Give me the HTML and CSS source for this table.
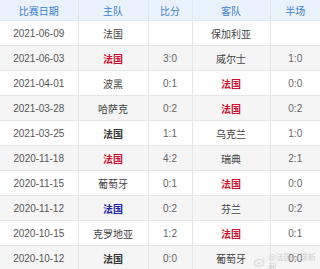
FILE: index.html
```html
<!DOCTYPE html>
<html>
<head>
<meta charset="utf-8">
<link rel="stylesheet" href="styles.css">
</head>
<body>
<div class="wrap">
<table class="tbl">
<colgroup><col class="c1"><col class="c2"><col class="c3"><col class="c4"><col class="c5"></colgroup>
<thead>
<tr><th>比赛日期</th><th>主队</th><th>比分</th><th>客队</th><th>半场</th></tr>
</thead>
<tbody>
<tr><td>2021-06-09</td><td>法国</td><td></td><td>保加利亚</td><td></td></tr>
<tr><td>2021-06-03</td><td class="red">法国</td><td>3:0</td><td>威尔士</td><td>1:0</td></tr>
<tr><td>2021-04-01</td><td>波黑</td><td>0:1</td><td class="red">法国</td><td>0:0</td></tr>
<tr><td>2021-03-28</td><td>哈萨克</td><td>0:2</td><td class="red">法国</td><td>0:2</td></tr>
<tr><td>2021-03-25</td><td class="bold">法国</td><td>1:1</td><td>乌克兰</td><td>1:0</td></tr>
<tr><td>2020-11-18</td><td class="red">法国</td><td>4:2</td><td>瑞典</td><td>2:1</td></tr>
<tr><td>2020-11-15</td><td>葡萄牙</td><td>0:1</td><td class="red">法国</td><td>0:0</td></tr>
<tr><td>2020-11-12</td><td class="blue">法国</td><td>0:2</td><td>芬兰</td><td>0:2</td></tr>
<tr><td>2020-10-15</td><td>克罗地亚</td><td>1:2</td><td class="red">法国</td><td>0:1</td></tr>
<tr><td>2020-10-12</td><td class="bold">法国</td><td>0:0</td><td>葡萄牙</td><td>0:0</td></tr>
</tbody>
</table>
<div class="mark">
<svg class="wlogo" width="13" height="10" viewBox="0 0 14 11"><ellipse cx="6" cy="6.5" rx="5.5" ry="4" fill="none" stroke="#bbb" stroke-width="1.2"/><circle cx="5.5" cy="7" r="1.6" fill="#c8c8c8"/><path d="M10 1.5 A3 3 0 0 1 13 4.5" fill="none" stroke="#ccc" stroke-width="1"/></svg>
<span class="mtext">@法国足球新闻</span>
</div>
</div>
</body>
</html>
```
FILE: styles.css
```css
html, body {
  margin: 0;
  padding: 0;
  background: #fff;
}
.wrap {
  position: relative;
  width: 320px;
  height: 269px;
  overflow: hidden;
}
.tbl {
  width: 320px;
  border-collapse: collapse;
  table-layout: fixed;
  font-family: "Liberation Sans", "Noto Sans CJK SC", sans-serif;
  font-size: 10px;
  color: #444;
}
.c1 { width: 78px; }
.c2 { width: 70px; }
.c3 { width: 44px; }
.c4 { width: 78px; }
.c5 { width: 50px; }
.tbl th {
  height: 20px;
  padding: 0;
  background: #e9f2fb;
  color: #3f82cc;
  font-weight: normal;
  text-align: center;
  border: 1px solid #dde8f3;
  border-top: none;
}
.tbl td {
  height: 24px;
  padding: 0;
  text-align: center;
  border: 1px solid #e6e6e6;
  color: #444;
}
.tbl td:first-child { color: #555; }
.tbl th:first-child, .tbl td:first-child { border-left: none; }
.tbl th:last-child, .tbl td:last-child { border-right: none; }
.tbl td:nth-child(3), .tbl td:nth-child(5) { color: #666; }
.tbl tbody tr:nth-child(even) td { background: #f5f5f5; }
.red { color: #cc1133 !important; font-weight: bold; }
.blue { color: #2222aa !important; font-weight: bold; }
.bold { color: #333 !important; font-weight: bold; }
.mark {
  position: absolute;
  left: 254px;
  top: 252px;
  display: flex;
  align-items: center;
  gap: 2px;
  opacity: 0.5;
}
.mtext {
  font-family: "Noto Sans CJK SC", sans-serif;
  font-size: 8px;
  line-height: 10px;
  color: #aaa;
}
```
